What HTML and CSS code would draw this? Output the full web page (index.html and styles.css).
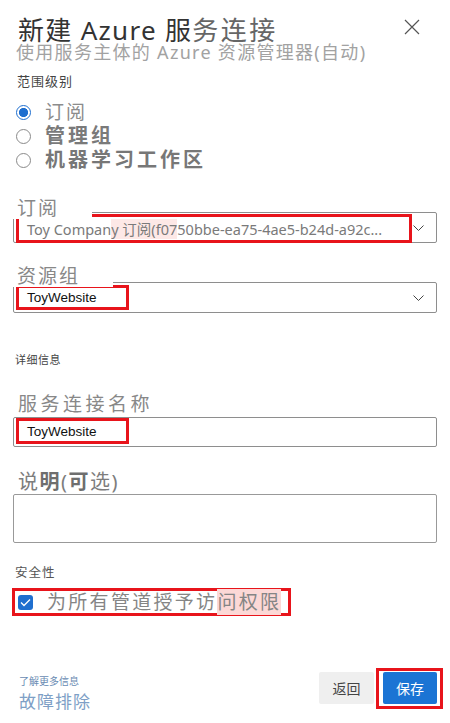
FILE: index.html
```html
<!DOCTYPE html>
<html lang="zh-CN">
<head>
<meta charset="utf-8">
<title>新建 Azure 服务连接</title>
<link rel="stylesheet" href="styles.css">
</head>
<body>
<div class="panel">
  <header class="head">
    <div class="head-text">
      <h1 class="title">新建 Azure 服<span class="light">务连接</span></h1>
      <p class="subtitle">使用服务主体的 Azure 资源管理器(自动)</p>
    </div>
    <button class="close" aria-label="关闭">
      <svg width="16" height="16" viewBox="0 0 16 16"><path d="M1 1L15 15M15 1L1 15" stroke="#555" stroke-width="1.2" fill="none"/></svg>
    </button>
  </header>

  <div class="small-label scope">范围级别</div>
  <div class="radios">
    <div class="radio-row"><span class="radio checked"></span><span class="radio-text r1">订阅</span></div>
    <div class="radio-row"><span class="radio"></span><span class="radio-text r2">管理组</span></div>
    <div class="radio-row"><span class="radio"></span><span class="radio-text r3">机器学习工作区</span></div>
  </div>

  <div class="field sub-field">
    <div class="field-label masked sub-label">订阅</div>
    <div class="select">
      <span class="hl wide"><span class="sub-text">Toy Compan<span class="pink">y 订阅(f07</span>50bbe-ea75-4ae5-b24d-a92c...</span></span>
      <svg class="chev" width="11" height="6" viewBox="0 0 11 6"><path d="M0.5 0.5L5.5 5.5L10.5 0.5" stroke="#444" stroke-width="1" fill="none"/></svg>
    </div>
  </div>

  <div class="field rg-field">
    <div class="field-label masked rg-label">资源组</div>
    <div class="select">
      <span class="hl short"><span class="value">ToyWebsite</span></span>
      <svg class="chev" width="11" height="6" viewBox="0 0 11 6"><path d="M0.5 0.5L5.5 5.5L10.5 0.5" stroke="#444" stroke-width="1" fill="none"/></svg>
    </div>
  </div>

  <div class="small-label details">详细信息</div>

  <div class="field name-field">
    <div class="field-label name-label">服务连接名称</div>
    <div class="input">
      <span class="hl short"><span class="value">ToyWebsite</span></span>
    </div>
  </div>

  <div class="field desc-field">
    <div class="field-label desc-label">说<b>明</b>(<b>可</b>选)</div>
    <div class="textarea"></div>
  </div>

  <div class="small-label security">安全性</div>
  <div class="check-row">
    <span class="checkbox">
      <svg width="11" height="9" viewBox="0 0 11 9"><path d="M1 4.5L4 7.5L10 1.5" stroke="#fff" stroke-width="1.3" fill="none"/></svg>
    </span>
    <span class="check-text">为所有管道授予访<span class="pink2">问权限</span></span>
  </div>

  <footer class="foot">
    <div class="links">
      <a class="more">了解更多信息</a>
      <a class="trouble">故障排除</a>
    </div>
    <div class="buttons">
      <button class="btn back">返回</button>
      <span class="save-wrap"><button class="btn save">保存</button></span>
    </div>
  </footer>
</div>
</body>
</html>
```

FILE: styles.css
```css
* { box-sizing: border-box; }
html, body {
  margin: 0;
  padding: 0;
  background: #fff;
}
body {
  width: 450px;
  height: 723px;
  overflow: hidden;
  font-family: "Noto Sans", "Noto Sans CJK SC", sans-serif;
  color: #333;
}
.panel {
  padding: 0 13px;
}
.head {
  display: flex;
  justify-content: space-between;
  align-items: flex-start;
  padding-top: 16px;
}
.title {
  margin: 0;
  padding-left: 5px;
  font-size: 26px;
  line-height: 28px;
  font-weight: 400;
  color: #333;
  letter-spacing: 1.3px;
}
.title .light {
  color: #666;
  letter-spacing: 2.5px;
}
.subtitle {
  margin: 0;
  padding-left: 3px;
  font-size: 18px;
  line-height: 16px;
  color: #a2a2a2;
  letter-spacing: 1.3px;
}
.close {
  border: 0;
  background: transparent;
  padding: 0;
  width: 16px;
  height: 16px;
  margin: 3px 17px 0 0;
  display: block;
}
.close svg { display: block; }

.small-label {
  font-size: 13px;
  line-height: 16px;
  color: #444;
}
.scope {
  margin-top: 13px;
  padding-left: 4px;
  letter-spacing: 1px;
}
.radios {
  margin-top: 11px;
}
.radio-row {
  display: flex;
  align-items: center;
  height: 24px;
  padding-left: 3px;
}
.radio {
  width: 15px;
  height: 15px;
  border: 1px solid #8a8a8a;
  border-radius: 50%;
  flex: none;
  background: #fff;
}
.radio.checked {
  border: 1.5px solid #1f6fcf;
  background: radial-gradient(circle, #1f6fcf 0 4.3px, #fff 4.8px);
}
.radio-text {
  margin-left: 14px;
  color: #888;
  white-space: nowrap;
}
.r1 { font-size: 19px; line-height: 22px; letter-spacing: 2px; color: #8c8c8c; }
.r2 { font-size: 20px; line-height: 22px; letter-spacing: 3px; font-weight: 700; color: #7a7a7a; }
.r3 { font-size: 20px; line-height: 22px; letter-spacing: 3px; font-weight: 700; color: #777; }

.field-label {
  font-size: 19px;
  line-height: 22px;
  color: #888;
  letter-spacing: 2px;
  padding-left: 4px;
}
.masked {
  position: relative;
  z-index: 1;
  display: block;
  width: max-content;
  background: #fff;
}
.sub-field { margin-top: 25px; }
.sub-label {
  padding-right: 33px;
  margin-bottom: -7px;
}
.rg-field { margin-top: 22px; }
.rg-label {
  padding-right: 33px;
  margin-bottom: -5px;
}
.select, .input {
  display: flex;
  align-items: flex-start;
  border: 1px solid #8e8e8e;
  border-radius: 2px;
  height: 31px;
  padding: 0 0 0 2px;
  position: relative;
}
.input { height: 30px; }
.hl {
  display: flex;
  align-items: center;
  border: 3px solid #e8141b;
  padding-left: 8px;
  white-space: nowrap;
  overflow: hidden;
}
.hl.wide {
  width: 396px;
  height: 29px;
  margin-top: 1px;
}
.hl.short {
  width: 113px;
  height: 25px;
  margin-top: 2px;
}
.input .hl.short {
  margin-top: 0;
  height: 26px;
}
.sub-text {
  font-size: 14.5px;
  color: #7a7a7a;
  letter-spacing: 0;
}
.pink {
  background: #fde8e6;
}
.value {
  font-family: "Liberation Sans", "Noto Sans CJK SC", sans-serif;
  font-size: 13.5px;
  color: #111;
}
.chev {
  margin: 12px 12px 0 auto;
  display: block;
}

.details {
  margin-top: 40px;
  padding-left: 2px;
  font-size: 11px;
  line-height: 14px;
  letter-spacing: 0.5px;
}
.name-field { margin-top: 26px; }
.name-label {
  letter-spacing: 3.5px;
  padding-left: 5px;
  margin-bottom: 2px;
}
.desc-field { margin-top: 23px; }
.desc-label {
  font-size: 20px;
  line-height: 24px;
  padding-left: 5px;
  letter-spacing: 1.5px;
  color: #7d7d7d;
}
.desc-label b { font-weight: 700; color: #6e6e6e; }
.textarea {
  height: 49px;
  border: 1px solid #999;
  border-radius: 2px;
}
.security {
  margin-top: 22px;
  padding-left: 2px;
  font-size: 12.5px;
  color: #555;
  letter-spacing: 1px;
}
.check-row {
  margin: 7px 0 0 -1px;
  width: 279px;
  height: 28px;
  border: 3px solid #e8141b;
  display: flex;
  align-items: center;
  padding-left: 3px;
}
.checkbox {
  width: 15px;
  height: 15px;
  border-radius: 3px;
  background: #1f6fcf;
  display: flex;
  align-items: center;
  justify-content: center;
  flex: none;
}
.checkbox svg { display: block; }
.check-text {
  margin-left: 14px;
  font-size: 19px;
  line-height: 22px;
  letter-spacing: 2.3px;
  color: #858585;
  white-space: nowrap;
}
.pink2 { background: #fcd8d6; }

.foot {
  margin-top: 52px;
  margin-right: -6px;
  display: flex;
  justify-content: space-between;
  align-items: flex-start;
}
.links {
  display: flex;
  flex-direction: column;
  margin-top: 6px;
  padding-left: 6px;
}
.more {
  font-size: 10px;
  line-height: 14px;
  color: #6a8bb3;
  letter-spacing: 0;
}
.trouble {
  margin-top: 3px;
  font-size: 17px;
  line-height: 22px;
  color: #7e9fc6;
  letter-spacing: 1px;
}
.buttons {
  display: flex;
  align-items: flex-start;
}
.btn {
  border: 0;
  font-family: "Noto Sans CJK SC", sans-serif;
  font-size: 14px;
  height: 32px;
  padding: 0;
  border-radius: 2px;
}
.back {
  width: 55px;
  margin-top: 4px;
  margin-right: 2px;
  background: #efefef;
  color: #444;
}
.save-wrap {
  display: block;
  border: 3px solid #e8141b;
  padding: 1px 3px 2px 4px;
}
.save {
  display: block;
  width: 54px;
  background: #1b74d4;
  color: #fff;
}
```
